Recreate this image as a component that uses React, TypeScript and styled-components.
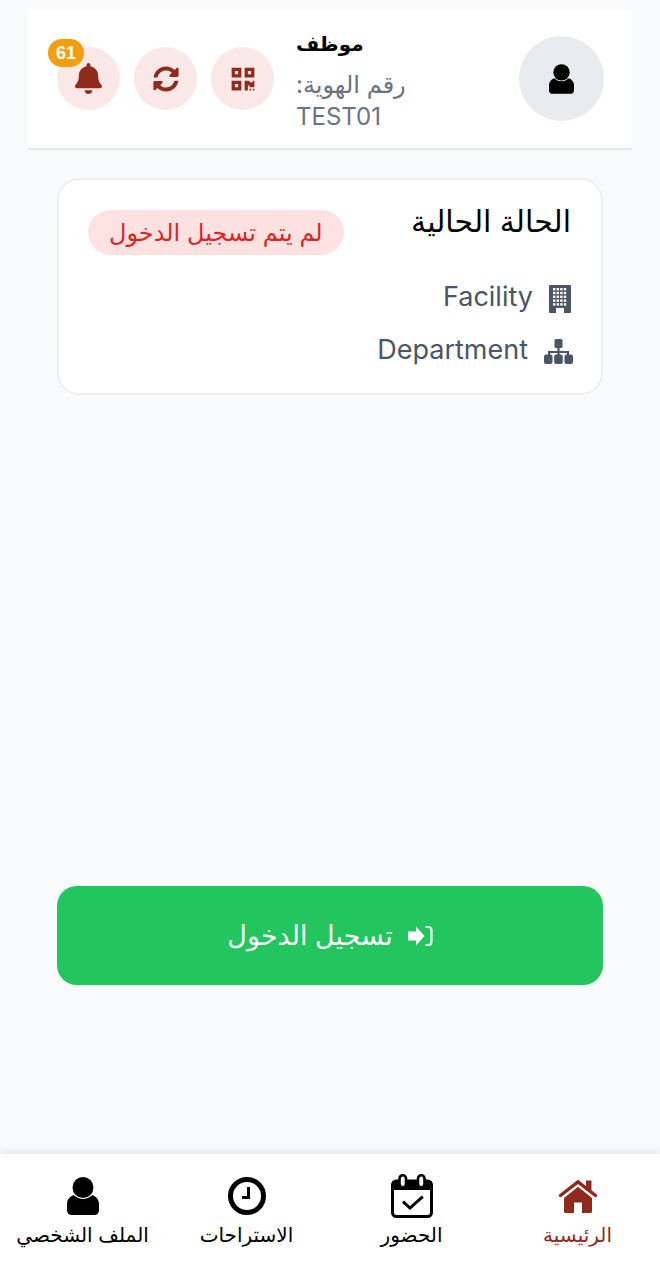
import React from 'react';
import styled, { createGlobalStyle } from 'styled-components';
import { FaBell, FaQrcode, FaSyncAlt } from 'react-icons/fa';

const palette = {
  brand: '#8f2a1c',
  brandSoft: '#fae8e6',
  gray: '#6b7280',
  slate: '#4b5563',
  line: '#e5e7eb',
  page: '#f9fafb',
};

const GlobalStyle = createGlobalStyle`
  html, body {
    margin: 0;
    padding: 0;
    background: ${palette.page};
  }
  body {
    font-family: Inter, "DejaVu Sans", sans-serif;
    color: #000;
  }
  * {
    box-sizing: border-box;
  }
  svg {
    display: block;
    flex: none;
  }
`;

const UserIcon = ({ width, height }: { width: number; height: number }) => (
  <svg width={width} height={height} viewBox="0 0 32 38" fill="currentColor">
    <circle cx="16" cy="10.5" r="10.5" />
    <path d="M0 33V27C0 22.5 3 19.5 6.5 18Q16 26 25.5 18C29 19.5 32 22.5 32 27V33Q32 38 27 38H5Q0 38 0 33Z" />
  </svg>
);

const BuildingIcon = () => (
  <svg width="22" height="28" viewBox="0 0 22 28">
    <rect width="22" height="28" rx="1" fill={palette.slate} />
    {[4, 7.6, 11.2, 14.8].map((x) =>
      [3, 6.8, 10.6, 14.4, 18.2].map((y) => (
        <rect key={`${x}-${y}`} x={x} y={y} width="2.4" height="2.4" fill="#fff" />
      ))
    )}
    <rect x="7" y="23" width="8" height="5" fill="#fff" />
  </svg>
);

const SitemapIcon = () => (
  <svg width="29" height="25" viewBox="0 0 29 25" fill={palette.slate}>
    <rect x="10.5" y="0" width="8" height="9" rx="1.5" />
    <path d="M13.4 8h2.2v4H25v4h-2.2v-2H15.6v2h-2.2v-2H6.2v2H4v-4h9.4z" />
    <rect x="0" y="15.5" width="8.5" height="9.5" rx="2" />
    <rect x="10.2" y="15.5" width="8.6" height="9.5" rx="2" />
    <rect x="20.5" y="15.5" width="8.5" height="9.5" rx="2" />
  </svg>
);

const SignInIcon = () => (
  <svg width="25" height="22" viewBox="0 0 25 22" fill="#fff">
    <path d="M0 6.5H8V1.5L16.5 11L8 20.5V15.5H0Z" />
    <path d="M17.5 2H20Q23.5 2 23.5 5.5V16.5Q23.5 20 20 20H17.5" fill="none" stroke="#fff" strokeWidth="2.2" />
  </svg>
);

const HomeIcon = () => (
  <svg width="38" height="33" viewBox="0 0 38 33" fill="currentColor">
    <path d="M1.5 15.5L19 1.8L36.5 15.5" fill="none" stroke="currentColor" strokeWidth="3.4" strokeLinecap="round" />
    <rect x="27" y="0.5" width="5.5" height="10" />
    <path d="M19 6.8L33 18V31.5Q33 33 31.5 33H23V22.5H15V33H6.5Q5 33 5 31.5V18Z" />
  </svg>
);

const CalendarIcon = () => (
  <svg width="42" height="44" viewBox="0 0 42 44" fill="none" stroke="#000">
    <rect x="1.5" y="7" width="39" height="35.5" rx="4" strokeWidth="3" />
    <rect x="1.5" y="7" width="39" height="9" fill="#000" strokeWidth="0" />
    <rect x="8.5" y="1.3" width="6.5" height="12" rx="3.2" fill="#fff" strokeWidth="2.6" />
    <rect x="27" y="1.3" width="6.5" height="12" rx="3.2" fill="#fff" strokeWidth="2.6" />
    <polyline points="12,27.7 19,34 31.7,22.7" strokeWidth="3" />
  </svg>
);

const ClockIcon = () => (
  <svg width="38" height="38" viewBox="0 0 38 38" fill="none" stroke="#000">
    <circle cx="19" cy="19" r="16.5" strokeWidth="5" />
    <polyline points="20.5,10 20.5,20.5 14,20.5" strokeWidth="3" />
  </svg>
);

const Screen = styled.div`
  direction: rtl;
  width: 660px;
  height: 1280px;
  padding-top: 10px;
  display: flex;
  flex-direction: column;
  overflow: hidden;
`;

const Header = styled.header`
  height: 140px;
  margin: 0 28px;
  padding: 26px 28px 0 29px;
  display: flex;
  align-items: flex-start;
  background: #fff;
  border-bottom: 2px solid ${palette.line};
`;

const Avatar = styled.div`
  width: 85px;
  height: 85px;
  border-radius: 50%;
  background: #e8eaed;
  display: flex;
  align-items: center;
  justify-content: center;
`;

const Info = styled.div`
  flex: 1;
  display: flex;
  flex-direction: column;
  align-items: flex-end;
  padding-left: 22px;
`;

const Name = styled.div`
  width: 110px;
  margin-top: -7px;
  margin-bottom: 10px;
  font-size: 20px;
  font-weight: 600;
  line-height: 30px;
  text-align: left;
`;

const IdLine = styled.div`
  width: 110px;
  font-size: 24px;
  line-height: 32px;
  color: ${palette.gray};
  text-align: left;
`;

const Actions = styled.div`
  display: flex;
  gap: 14px;
  margin-top: 11px;
`;

const RoundButton = styled.button<{ $size: number }>`
  position: relative;
  width: 63px;
  height: 63px;
  padding: 0;
  border: 0;
  border-radius: 50%;
  background: ${palette.brandSoft};
  color: ${palette.brand};
  display: flex;
  align-items: center;
  justify-content: center;
  font-size: ${(p) => p.$size}px;
`;

const Badge = styled.span`
  position: absolute;
  top: -8px;
  left: -9px;
  width: 36px;
  height: 28px;
  border-radius: 14px;
  background: #f59e0b;
  color: #fff;
  font-size: 18px;
  font-weight: 600;
  line-height: 28px;
  text-align: center;
`;

const Card = styled.section`
  margin: 28px 57px 0;
  height: 217px;
  padding: 23px 30px 0 29px;
  background: #fff;
  border: 2px solid #eceef0;
  border-radius: 22px;
`;

const CardTop = styled.div`
  display: flex;
  justify-content: space-between;
  align-items: flex-start;
  margin-bottom: 15px;
`;

const CardTitle = styled.h2`
  margin: 0;
  font-size: 30px;
  font-weight: 400;
  line-height: 36px;
`;

const StatusPill = styled.span`
  height: 45px;
  padding: 0 21px;
  border-radius: 23px;
  background: #fee2e2;
  color: #dc2626;
  font-size: 24px;
  line-height: 45px;
  margin-top: 7px;
`;

const MetaRow = styled.div`
  display: flex;
  align-items: center;
  gap: 16px;
  height: 53px;
  font-size: 27px;
  color: ${palette.slate};
`;

const MetaIcon = styled.span<{ $drop: number; $overhang?: number }>`
  margin-top: ${(p) => p.$drop}px;
  margin-right: ${(p) => p.$overhang ?? 0}px;
`;

const Spacer = styled.div`
  height: 491px;
  flex: none;
`;

const CheckInButton = styled.button`
  direction: rtl;
  flex: none;
  margin: 0 57px;
  height: 99px;
  border: 0;
  border-radius: 20px;
  background: #22c55e;
  color: #fff;
  font-family: inherit;
  font-size: 27px;
  display: flex;
  align-items: center;
  justify-content: center;
  gap: 15px;
`;

const BottomNav = styled.nav`
  margin-top: auto;
  height: 126px;
  background: #fff;
  box-shadow: 0 -2px 8px rgba(0, 0, 0, 0.1);
  display: grid;
  grid-template-columns: 165px 167px 163px 165px;
`;

const NavItem = styled.div<{ $active?: boolean }>`
  display: flex;
  flex-direction: column;
  align-items: center;
  padding-top: 20px;
  color: ${(p) => (p.$active ? palette.brand : '#000')};
  white-space: nowrap;
`;

const NavIcon = styled.div`
  height: 44px;
  display: flex;
  align-items: center;
  justify-content: center;
`;

const NavLabel = styled.span`
  font-size: 20px;
  line-height: 28px;
  margin-top: 3px;
`;

const tabs = [
  { label: 'الرئيسية', icon: <HomeIcon />, active: true },
  { label: 'الحضور', icon: <CalendarIcon /> },
  { label: 'الاستراحات', icon: <ClockIcon /> },
  { label: 'الملف الشخصي', icon: <UserIcon width={32} height={38} /> },
];

const App: React.FC = () => {
  return (
    <Screen>
      <GlobalStyle />
      <Header>
        <Avatar>
          <UserIcon width={25} height={30} />
        </Avatar>
        <Info>
          <Name>موظف</Name>
          <IdLine>رقم الهوية: TEST01</IdLine>
        </Info>
        <Actions>
          <RoundButton $size={26}>
            <FaQrcode />
          </RoundButton>
          <RoundButton $size={26}>
            <FaSyncAlt />
          </RoundButton>
          <RoundButton $size={31}>
            <FaBell />
            <Badge>61</Badge>
          </RoundButton>
        </Actions>
      </Header>

      <Card>
        <CardTop>
          <CardTitle>الحالة الحالية</CardTitle>
          <StatusPill>لم يتم تسجيل الدخول</StatusPill>
        </CardTop>
        <MetaRow>
          <MetaIcon $drop={4}>
            <BuildingIcon />
          </MetaIcon>
          <span>Facility</span>
        </MetaRow>
        <MetaRow>
          <MetaIcon $drop={3} $overhang={-2}>
            <SitemapIcon />
          </MetaIcon>
          <span>Department</span>
        </MetaRow>
      </Card>

      <Spacer />
      <CheckInButton>
        <SignInIcon />
        <span>تسجيل الدخول</span>
      </CheckInButton>

      <BottomNav>
        {tabs.map((tab) => (
          <NavItem key={tab.label} $active={tab.active}>
            <NavIcon>{tab.icon}</NavIcon>
            <NavLabel>{tab.label}</NavLabel>
          </NavItem>
        ))}
      </BottomNav>
    </Screen>
  );
};

export default App;
